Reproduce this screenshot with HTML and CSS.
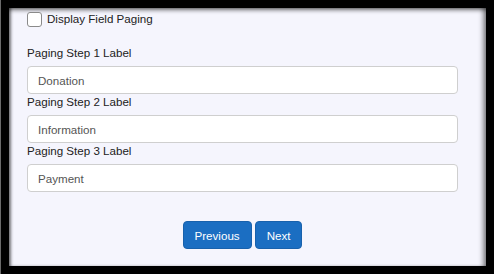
FILE: index.html
```html
<!DOCTYPE html>
<html lang="en">
<head>
    <meta charset="UTF-8">
    <meta name="viewport" content="width=device-width, initial-scale=1.0">
    <title>Field Paging</title>
    <link rel="stylesheet" href="styles.css">
</head>
<body>

    <div class="window">
        <form class="paging-form">
            <label class="check-row">
                <input type="checkbox" class="check">
                <span>Display Field Paging</span>
            </label>

            <div class="field">
                <label for="step1">Paging Step 1 Label</label>
                <input id="step1" type="text" value="Donation">
            </div>
            <div class="field">
                <label for="step2">Paging Step 2 Label</label>
                <input id="step2" type="text" value="Information">
            </div>
            <div class="field">
                <label for="step3">Paging Step 3 Label</label>
                <input id="step3" type="text" value="Payment">
            </div>

            <div class="actions">
                <button type="button" class="btn">Previous</button>
                <button type="button" class="btn">Next</button>
            </div>
        </form>
    </div>

</body>
</html>
```

FILE: styles.css
```css
html, body {
    margin: 0;
    height: 100%;
}
body {
    background: #000;
    font-family: "Liberation Sans", Arial, sans-serif;
    font-size: 11.6px;
    color: #222;
    box-shadow: inset 1px 0 0 #6a6a6a;
    padding: 8px 8px 8px 9px;
    box-sizing: border-box;
    overflow: hidden;
}
.window {
    height: 258px;
    background: #f5f5fd;
    box-shadow: inset 0 4px 4px -2px rgba(0, 0, 0, 0.55),
                inset 3px 0 3px -1px rgba(0, 0, 0, 0.5),
                inset -6px 0 5px -3px rgba(0, 0, 0, 0.45);
    overflow: hidden;
}
.paging-form {
    width: 431px;
    padding: 3px 0 0 18px;
}
.check-row {
    display: flex;
    align-items: center;
    gap: 5px;
    line-height: 16px;
    margin-bottom: 18px;
}
.check {
    appearance: none;
    -webkit-appearance: none;
    width: 15px;
    height: 15px;
    margin: 0;
    background: #fff;
    border: 1px solid #8a8a8a;
    border-radius: 3px;
}
.field label {
    display: block;
    line-height: 16px;
    margin-bottom: 5px;
}
.field input {
    display: block;
    box-sizing: border-box;
    width: 100%;
    height: 28px;
    margin: 0;
    padding: 0 10px;
    font-family: "Liberation Sans", Arial, sans-serif;
    font-size: 11.6px;
    color: #555;
    background: #fff;
    border: 1px solid #cfcfcf;
    border-radius: 4px;
}
.actions {
    display: flex;
    justify-content: center;
    gap: 3px;
    margin-top: 29px;
}
.btn {
    height: 28px;
    padding: 0 11px;
    font-family: "Liberation Sans", Arial, sans-serif;
    font-size: 11.6px;
    color: #fff;
    background: #1b6ec2;
    border: 1px solid #1861ac;
    border-radius: 4px;
    cursor: pointer;
}
```
